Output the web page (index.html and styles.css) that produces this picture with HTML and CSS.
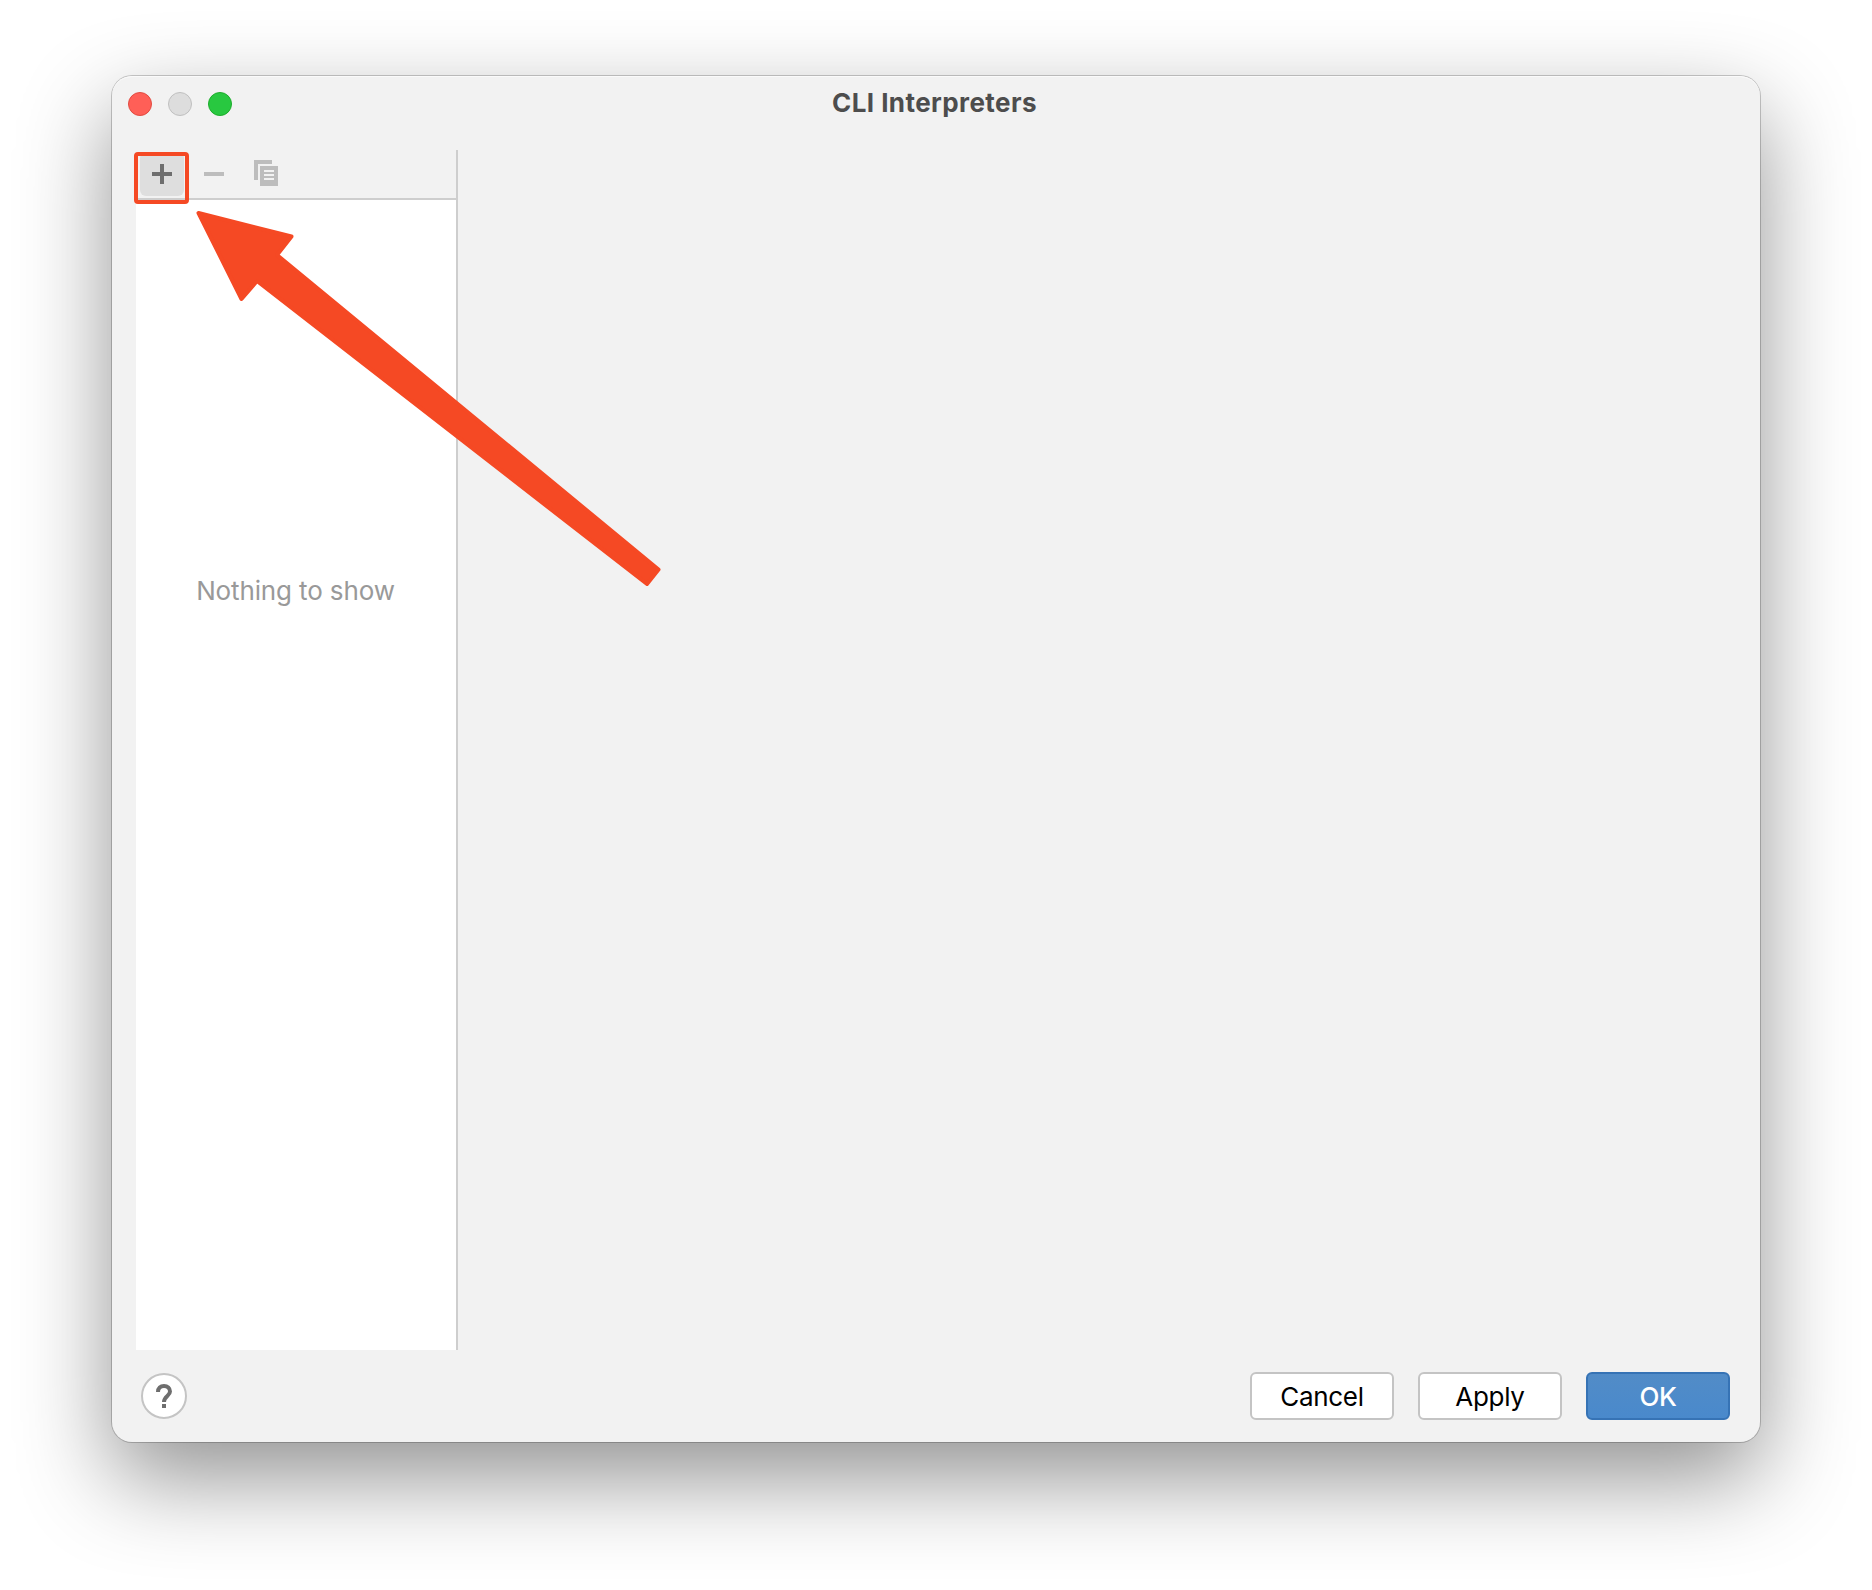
FILE: index.html
```html
<!DOCTYPE html>
<html lang="en">
<head>
<meta charset="utf-8">
<title>CLI Interpreters</title>
<link rel="stylesheet" href="styles.css">
</head>
<body>
<main class="window">
  <header class="titlebar">
    <div class="lights"><span class="light close"></span><span class="light minimize"></span><span class="light zoom"></span></div>
    <h1 class="title">CLI Interpreters</h1>
  </header>
  <section class="content">
    <aside class="sidebar">
      <div class="toolbar">
        <button class="tool active" aria-label="Add"><svg width="20" height="20" viewBox="0 0 20 20"><path d="M8 0h4v8h8v4h-8v8H8v-8H0V8h8z" fill="#6e6e6e"/></svg></button>
        <button class="tool" aria-label="Remove"><svg width="20" height="20" viewBox="0 0 20 20"><path d="M0 8h20v4H0z" fill="#bdbdbd"/></svg></button>
        <button class="tool copy" aria-label="Copy"><svg width="24" height="26" viewBox="0 0 24 26"><path d="M0 0h18v4H4v16H0z" fill="#bdbdbd"/><path fill-rule="evenodd" d="M6 6h18v20H6zM10 10v2h10v-2zM10 14v2h10v-2zM10 18v2h10v-2z" fill="#bdbdbd"/></svg></button>
      </div>
      <div class="list"><span class="empty">Nothing to show</span></div>
    </aside>
  </section>
  <footer class="footer">
    <button class="help" aria-label="Help"><svg width="16" height="24" viewBox="0 0 16 24"><path d="M2 8C2 4 4.500 2 8 2s6 2 6 5.500c0 4.500-6 4.500-6 10.500" fill="none" stroke="#6e6e6e" stroke-width="4"/><path d="M6 20h4v4H6z" fill="#6e6e6e"/></svg></button>
    <div class="actions">
      <button class="btn">Cancel</button>
      <button class="btn">Apply</button>
      <button class="btn primary">OK</button>
    </div>
  </footer>
</main>
<svg class="annotation" width="1872" height="1590" viewBox="0 0 1872 1590">
  <rect x="136" y="154" width="51" height="48" rx="2" fill="none" stroke="#f54924" stroke-width="4"/>
  <path d="M198.500 213L291.500 236.500L277 255L658.500 569.500L647 584L257 281L241.500 299Z" fill="#f54924" stroke="#f54924" stroke-width="4" stroke-linejoin="round"/>
</svg>
</body>
</html>
```
FILE: styles.css
```css
* { box-sizing: border-box; }
body {
  margin: 0;
  width: 1872px;
  height: 1590px;
  padding: 76px 112px 148px;
  background: #fff;
  overflow: hidden;
  position: relative;
  font: 26px/32px Inter, "Liberation Sans", sans-serif;
}
button { font: inherit; margin: 0; padding: 0; border: 0; background: none; }
svg { display: block; }
.window {
  width: 1648px;
  height: 1366px;
  display: flex;
  flex-direction: column;
  background: #f2f2f2;
  border-radius: 20px;
  box-shadow: 0 0 0 1px rgba(0, 0, 0, .2), inset 0 1px 0 #fafafa, 0 36px 92px rgba(0, 0, 0, .43);
}
.titlebar {
  height: 74px;
  padding: 10px 16px;
  display: grid;
  grid-template-columns: 104px 1fr 107px;
}
.lights { display: flex; gap: 16px; padding-top: 6px; }
.light { width: 24px; height: 24px; border-radius: 50%; border: 1px solid; }
.close { background: #ff5f57; border-color: #e24b41; }
.minimize { background: #ddd; border-color: #c0c0c0; }
.zoom { background: #28c840; border-color: #1dad2b; }
.title { margin: 0; padding-top: 1px; font-size: 26px; font-weight: 700; letter-spacing: .42px; color: #4d4d4d; text-align: center; }
.content { height: 1200px; padding-left: 24px; display: flex; }
.sidebar {
  width: 322px;
  border-right: 2px solid #cecece;
  display: flex;
  flex-direction: column;
}
.toolbar {
  height: 50px;
  border-bottom: 2px solid #cecece;
  padding: 2px 4px;
  display: flex;
  gap: 8px;
}
.tool { width: 44px; height: 44px; display: grid; place-items: center; border-radius: 6px; }
.active { background: #dedede; }
.copy { padding-bottom: 2px; }
.list { flex: 1; background: #fff; text-align: center; padding: 375px 1px 0 0; color: #999; letter-spacing: -.13px; }
.footer {
  flex: 1;
  padding: 22px 30px 0 29px;
  display: flex;
  justify-content: space-between;
}
.help {
  width: 46px;
  height: 46px;
  margin-top: 1px;
  border: 2px solid #c4c4c4;
  border-radius: 50%;
  background: #fff;
  display: grid;
  place-items: center;
}
.actions { display: flex; gap: 24px; }
.btn {
  width: 144px;
  height: 48px;
  padding-top: 2px;
  border: 2px solid #c4c4c4;
  border-radius: 6px;
  background: #fff;
  color: #000;
  letter-spacing: -.3px;
}
.primary {
  border: 2px solid #3673b5;
  background: linear-gradient(#528cc7, #4989cc);
  background-origin: border-box;
  color: #fff;
  font-weight: 500;
}
.annotation { position: absolute; left: 0; top: 0; pointer-events: none; }
```
